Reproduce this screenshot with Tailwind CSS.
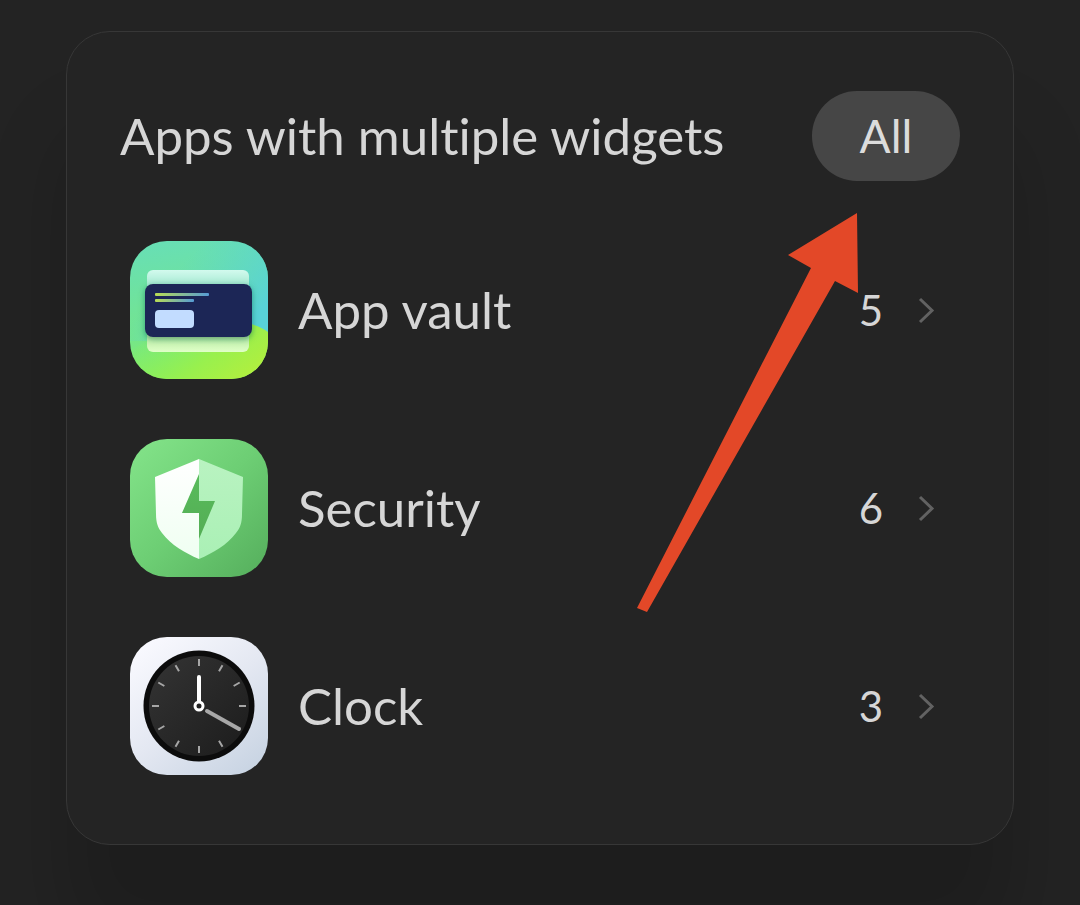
<!DOCTYPE html>
<html lang="en">
<head>
<meta charset="utf-8">
<meta name="viewport" content="width=device-width, initial-scale=1">
<title>Widgets</title>
<script src="https://cdn.jsdelivr.net/npm/@tailwindcss/browser@4"></script>
</head>
<body class="min-h-screen overflow-x-hidden bg-[#232323] font-['Lato',sans-serif] text-[#d6d6d6] [font-variant-ligatures:none]">
<main class="px-[66px] pt-[31px] pb-[60px]">
  <section class="relative rounded-[44px] border border-[#373737] bg-[#242424] px-[53px] pt-[59px] pb-[69px] shadow-[0_100px_80px_rgba(0,0,0,0.17)]">
    <header class="flex items-center justify-between">
      <h1 class="text-[51px] leading-[60px] whitespace-nowrap">Apps with multiple widgets</h1>
      <button type="button" class="h-[90px] w-[148px] shrink-0 rounded-full bg-[#464646] text-[46px] leading-[60px] text-[#dcdcdc]">All</button>
    </header>
    <ul class="mt-[60px] flex flex-col gap-[60px] pr-6 pl-[10px]">
      <li>
        <a href="#app-vault" class="flex items-center">
          <svg class="size-[138px] shrink-0" viewBox="0 0 138 138" aria-hidden="true">
            <defs>
              <linearGradient id="vbg" x1="0.35" y1="0" x2="0.5" y2="1"><stop offset="0" stop-color="#68dfb4"/><stop offset="0.55" stop-color="#72e493"/><stop offset="1" stop-color="#83ef62"/></linearGradient>
              <linearGradient id="vblue" x1="0.4" y1="0.2" x2="1" y2="0.6"><stop offset="0" stop-color="#58d2d8" stop-opacity="0"/><stop offset="1" stop-color="#58d2d8"/></linearGradient>
              <linearGradient id="vlime" x1="0.1" y1="0.2" x2="1" y2="0.7"><stop offset="0" stop-color="#86ef61" stop-opacity="0"/><stop offset="0.6" stop-color="#98f04e"/><stop offset="1" stop-color="#b0ef3f"/></linearGradient>
              <linearGradient id="vtop" x1="0" y1="0" x2="0" y2="1"><stop offset="0" stop-color="#d3faee"/><stop offset="0.6" stop-color="#a0e8cf"/></linearGradient>
              <linearGradient id="vbottom" x1="0" y1="0" x2="0" y2="1"><stop offset="0.4" stop-color="#b4eaa0"/><stop offset="1" stop-color="#e0ffc8"/></linearGradient>
              <linearGradient id="vline" x1="0" y1="0" x2="1" y2="0"><stop offset="0" stop-color="#b8dc55"/><stop offset="1" stop-color="#569bd5"/></linearGradient>
              <clipPath id="vclip"><rect width="138" height="138" rx="37"/></clipPath>
              <filter id="vshadow" x="-20%" y="-20%" width="140%" height="150%"><feDropShadow dx="0" dy="2" stdDeviation="3" flood-color="#176246" flood-opacity="0.55"/></filter>
            </defs>
            <g clip-path="url(#vclip)">
              <rect width="138" height="138" fill="url(#vbg)"/>
              <rect width="138" height="100" fill="url(#vblue)"/>
              <path d="M0 110C40 82 100 72 124 84C130 86 134 88 138 91V138H0Z" fill="url(#vlime)"/>
            </g>
            <rect x="17" y="29" width="102" height="28" rx="6" fill="url(#vtop)"/>
            <rect x="17" y="83" width="102" height="28" rx="6" fill="url(#vbottom)"/>
            <rect x="15" y="43" width="107" height="53" rx="8" fill="#1f2557" filter="url(#vshadow)"/>
            <rect x="25" y="52" width="54" height="3" rx="1" fill="url(#vline)"/>
            <rect x="25" y="58" width="39" height="3" rx="1" fill="url(#vline)"/>
            <rect x="25" y="69" width="39" height="18" rx="4" fill="#c2dcff"/>
          </svg>
          <span class="ml-[30px] flex-1 text-[51px] leading-[60px]">App vault</span>
          <span class="text-[42px] leading-[60px]">5</span>
          <svg class="ml-[33px] h-[28px] w-5 shrink-0" viewBox="0 0 20 28" fill="none" stroke="#626262" stroke-width="3" aria-hidden="true"><path d="M4 3L16 14.500L4 26"/></svg>
        </a>
      </li>
      <li>
        <a href="#security" class="flex items-center">
          <svg class="size-[138px] shrink-0" viewBox="0 0 138 138" aria-hidden="true">
            <defs>
              <linearGradient id="sbg" x1="0" y1="0" x2="1" y2="1"><stop offset="0" stop-color="#84e48a"/><stop offset="0.5" stop-color="#6dce74"/><stop offset="1" stop-color="#55ae5c"/></linearGradient>
              <linearGradient id="sleft" x1="0" y1="0" x2="0" y2="1"><stop offset="0" stop-color="#fff"/><stop offset="1" stop-color="#effff1"/></linearGradient>
              <linearGradient id="sright" x1="0" y1="0" x2="0" y2="1"><stop offset="0" stop-color="#b9f3c1"/><stop offset="1" stop-color="#aaf0b5"/></linearGradient>
              <linearGradient id="sbolt" x1="0" y1="0" x2="0" y2="1"><stop offset="0" stop-color="#58bc5b"/><stop offset="1" stop-color="#54ad55"/></linearGradient>
            </defs>
            <rect width="138" height="138" rx="37" fill="url(#sbg)"/>
            <path d="M69 20L25 38L26 75C26 84 28 89 32 94C41 106 55 114 69 120Z" fill="url(#sleft)"/>
            <path d="M69 20L113 38L112 75C112 84 110 89 106 94C97 106 83 114 69 120Z" fill="url(#sright)"/>
            <path d="M69 35L52 74H69V100L85 62H69Z" fill="url(#sbolt)"/>
          </svg>
          <span class="ml-[30px] flex-1 text-[51px] leading-[60px]">Security</span>
          <span class="text-[42px] leading-[60px]">6</span>
          <svg class="ml-[33px] h-[28px] w-5 shrink-0" viewBox="0 0 20 28" fill="none" stroke="#626262" stroke-width="3" aria-hidden="true"><path d="M4 3L16 14.500L4 26"/></svg>
        </a>
      </li>
      <li>
        <a href="#clock" class="flex items-center">
          <svg class="size-[138px] shrink-0" viewBox="0 0 138 138" aria-hidden="true">
            <defs>
              <linearGradient id="cbg" x1="0.1" y1="0" x2="0.9" y2="1"><stop offset="0" stop-color="#fafaff"/><stop offset="0.5" stop-color="#e4e8f2"/><stop offset="1" stop-color="#c7d3e2"/></linearGradient>
              <linearGradient id="cface" x1="0" y1="0" x2="1" y2="1"><stop offset="0" stop-color="#343434"/><stop offset="1" stop-color="#1c1c1c"/></linearGradient>
            </defs>
            <rect width="138" height="138" rx="37" fill="url(#cbg)"/>
            <circle cx="69" cy="69" r="55.500" fill="#0c0c0c"/>
            <circle cx="69" cy="69" r="50" fill="url(#cface)"/>
            <g stroke="#a6a6a6" stroke-width="2">
              <path d="M69 22V29M69 109V116M22 69H29M109 69H116"/>
              <path d="M69 22V29M69 109V116M22 69H29M109 69H116" transform="rotate(30 69 69)"/>
              <path d="M69 22V29M69 109V116M22 69H29M109 69H116" transform="rotate(60 69 69)"/>
            </g>
            <g fill="none" stroke-linecap="round" stroke-width="4">
              <path d="M77 74L109 92" stroke="#a8a8a8"/>
              <path d="M69 40V65" stroke="#fff"/>
              <circle cx="69" cy="69" r="4" stroke="#fff" fill="#222" stroke-width="3"/>
            </g>
          </svg>
          <span class="ml-[30px] flex-1 text-[51px] leading-[60px]">Clock</span>
          <span class="text-[42px] leading-[60px]">3</span>
          <svg class="ml-[33px] h-[28px] w-5 shrink-0" viewBox="0 0 20 28" fill="none" stroke="#626262" stroke-width="3" aria-hidden="true"><path d="M4 3L16 14.500L4 26"/></svg>
        </a>
      </li>
    </ul>
    <!-- Arrow pointing at the All button -->
    <svg class="pointer-events-none absolute top-[181px] right-[154px] h-[400px] w-[222px]" viewBox="0 0 222 400" aria-hidden="true">
      <path d="M220 0L151 42L174 55L0 395L10 399L198 68L221 80Z" fill="#e34828"/>
    </svg>
  </section>
</main>
</body>
</html>
